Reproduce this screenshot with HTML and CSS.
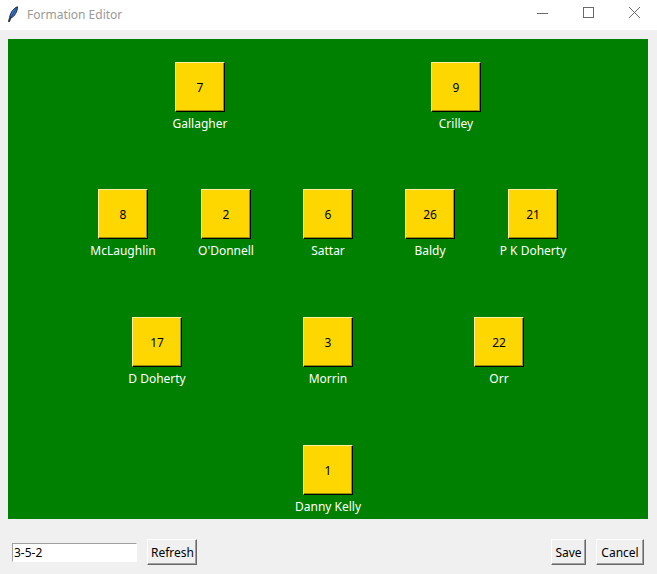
FILE: index.html
```html
<!DOCTYPE html>
<html>
<head>
<meta charset="utf-8">
<link rel="stylesheet" href="styles.css">
</head>
<body>
<div class="window">
  <div class="titlebar">
    <svg class="app-icon" width="12" height="16" viewBox="0 0 12 16">
      <path d="M10.5 0.8 C7 2 3.5 6 2.6 11.5 L1.5 15.5 L2.6 15.6 L3.6 12.2 C8 10.5 10.5 5 10.5 0.8 Z" fill="#3b7dd8" stroke="#111" stroke-width="0.9"/>
      <path d="M9.5 2.5 L3.4 12" stroke="#0a2a60" stroke-width="0.7" fill="none"/>
    </svg>
    <span class="title">Formation Editor</span>
    <div class="controls">
      <svg class="ctl" width="46" height="30" viewBox="0 0 46 30"><path d="M18 13.5 H29" stroke="#6a6a6a" stroke-width="1"/></svg>
      <svg class="ctl" width="46" height="30" viewBox="0 0 46 30"><rect x="18.5" y="7.5" width="10" height="10" fill="none" stroke="#6a6a6a" stroke-width="1"/></svg>
      <svg class="ctl" width="46" height="30" viewBox="0 0 46 30"><path d="M18 7 L29 18 M29 7 L18 18" stroke="#6a6a6a" stroke-width="1"/></svg>
    </div>
  </div>
  <div class="content">
    <div class="pitch">
      <div class="player" style="left:192px;top:23px"><div class="shirt">7</div><div class="name">Gallagher</div></div>
      <div class="player" style="left:448px;top:23px"><div class="shirt">9</div><div class="name">Crilley</div></div>

      <div class="player" style="left:115px;top:150px"><div class="shirt">8</div><div class="name">McLaughlin</div></div>
      <div class="player" style="left:218px;top:150px"><div class="shirt">2</div><div class="name">O'Donnell</div></div>
      <div class="player" style="left:320px;top:150px"><div class="shirt">6</div><div class="name">Sattar</div></div>
      <div class="player" style="left:422px;top:150px"><div class="shirt">26</div><div class="name">Baldy</div></div>
      <div class="player" style="left:525px;top:150px"><div class="shirt">21</div><div class="name">P K Doherty</div></div>

      <div class="player" style="left:149px;top:278px"><div class="shirt">17</div><div class="name">D Doherty</div></div>
      <div class="player" style="left:320px;top:278px"><div class="shirt">3</div><div class="name">Morrin</div></div>
      <div class="player" style="left:491px;top:278px"><div class="shirt">22</div><div class="name">Orr</div></div>

      <div class="player" style="left:320px;top:406px"><div class="shirt">1</div><div class="name">Danny Kelly</div></div>
    </div>
    <div class="toolbar">
      <input class="entry" type="text" value="3-5-2">
      <button class="btn refresh">Refresh</button>
      <div class="spacer"></div>
      <button class="btn save">Save</button>
      <button class="btn cancel">Cancel</button>
    </div>
  </div>
</div>
</body>
</html>
```
FILE: styles.css
```css
html, body {
  margin: 0;
  padding: 0;
  background: #f0f0f0;
  font-family: "Noto Sans", "Open Sans", sans-serif;
  font-size: 12px;
}
.window {
  width: 657px;
  height: 574px;
  background: #f0f0f0;
  overflow: hidden;
}
.titlebar {
  height: 30px;
  background: #ffffff;
  display: flex;
  align-items: center;
}
.app-icon {
  margin-left: 7px;
  margin-top: -2px;
}
.title {
  margin-left: 8px;
  color: #999999;
  font-size: 12px;
  margin-top: -2px;
}
.controls {
  margin-left: auto;
  display: flex;
  align-self: flex-start;
}
.ctl {
  display: block;
}
.content {
  padding: 9px 8px 0 8px;
}
.pitch {
  position: relative;
  width: 640px;
  height: 480px;
  background: #008000;
}
.player {
  position: absolute;
  width: 0;
  display: flex;
  flex-direction: column;
  align-items: center;
}
.shirt {
  flex: none;
  box-sizing: border-box;
  width: 50px;
  height: 50px;
  background: #ffd700;
  border-style: solid;
  border-width: 1px;
  border-color: #fff0a0 #000000 #000000 #fff0a0;
  box-shadow: inset -1px -1px 0 #a08c00;
  display: flex;
  align-items: center;
  justify-content: center;
  color: #000;
  font-size: 12px;
}
.name {
  margin-top: 4px;
  white-space: nowrap;
  color: #ffffff;
  font-size: 12px;
  line-height: 16px;
}
.toolbar {
  display: flex;
  align-items: center;
  margin-top: 20px;
  height: 26px;
}
.entry {
  box-sizing: border-box;
  margin: 0 0 0 4px;
  width: 125px;
  height: 19px;
  padding: 0 1px;
  border-style: solid;
  border-width: 1px;
  border-color: #a0a0a0 #ffffff #ffffff #a0a0a0;
  background: #ffffff;
  font-family: "Noto Sans", "Open Sans", sans-serif;
  font-size: 12px;
  color: #000;
  outline: none;
}
.btn {
  box-sizing: border-box;
  height: 26px;
  margin: 0;
  padding: 0 3px;
  background: #f0f0f0;
  border-style: solid;
  border-width: 1px;
  border-color: #ffffff #696969 #696969 #ffffff;
  box-shadow: inset -1px -1px 0 #a0a0a0;
  font-family: "Noto Sans", "Open Sans", sans-serif;
  font-size: 12px;
  color: #000;
}
.refresh {
  margin-left: 10px;
  width: 50px;
}
.spacer {
  flex: 1;
}
.save {
  width: 35px;
}
.cancel {
  margin-left: 10px;
  width: 48px;
  margin-right: 5px;
}
```
